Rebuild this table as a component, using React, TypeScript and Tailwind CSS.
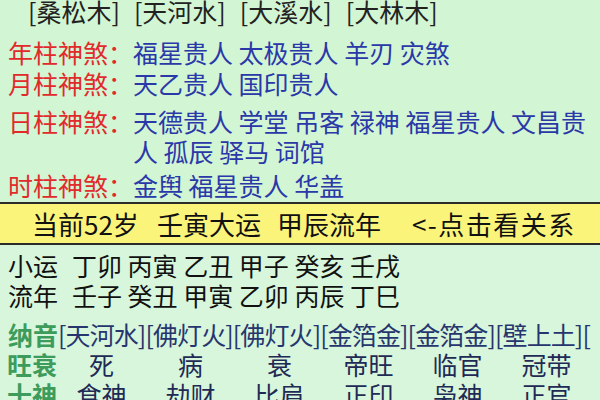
const font = { fontFamily: '"Noto Sans CJK SC", "Noto Sans", sans-serif' };

const pillars = ['[桑松木]', '[天河水]', '[大溪水]', '[大林木]'];

const shensha = [
  { label: '年柱神煞：', value: '福星贵人 太极贵人 羊刃 灾煞', cls: 'mt-[15px] leading-[31px]' },
  { label: '月柱神煞：', value: '天乙贵人 国印贵人', cls: 'leading-[31px]' },
  { label: '日柱神煞：', value: '天德贵人 学堂 吊客 禄神 福星贵人 文昌贵人 孤辰 驿马 词馆', cls: 'mt-[7px] leading-[30px]' },
  { label: '时柱神煞：', value: '金舆 福星贵人 华盖', cls: 'mt-[4px] leading-[31px]' },
];

const nayin = ['[天河水]', '[佛灯火]', '[佛灯火]', '[金箔金]', '[金箔金]', '[壁上土]', '['];
const wangshuai = ['死', '病', '衰', '帝旺', '临官', '冠带'];
const shishen = ['食神', '劫财', '比肩', '正印', '枭神', '正官'];

function GridRow({ label, items }: { label: string; items: string[] }) {
  return (
    <div className="grid grid-cols-[50px_repeat(6,89px)] pl-[7px] leading-[30px]">
      <span className="font-bold text-[#3d9b5b]">{label}</span>
      {items.map((it, i) => (
        <span key={i} className="text-center text-[#1f2a55]">{it}</span>
      ))}
    </div>
  );
}

export default function App() {
  return (
    <div className="w-[600px] h-[400px] overflow-hidden text-[25px]" style={font}>
      <div className="bg-[#d2f5d4] pb-[1px]">
        <div className="flex gap-[14px] h-[22px] leading-[22px] pl-[28px] text-[#222]">
          {pillars.map((p, i) => (
            <span key={i}>{p}</span>
          ))}
        </div>
        {shensha.map((r) => (
          <div key={r.label} className={`flex pl-[8px] ${r.cls}`}>
            <span className="w-[125px] shrink-0 text-[#e12a2a]">{r.label}</span>
            <span className="flex-1 text-[#2a38a8]">{r.value}</span>
          </div>
        ))}
      </div>

      <div className="flex h-[43px] pl-[32px] border-y-2 border-[#2b2b2b] bg-[#fbf47a] text-[26px] leading-[39px] text-[#111] whitespace-nowrap">
        <span>当前52岁</span>
        <span className="ml-[18px]">壬寅大运</span>
        <span className="ml-[16px]">甲辰流年</span>
        <span className="ml-[31px] tracking-[1.5px]">&lt;-点击看关系</span>
      </div>

      <div className="bg-[#d7f6dc] pt-[5px] h-[200px]">
        <div className="flex pl-[8px] leading-[30px] text-[#111]">
          <span className="w-[64px] shrink-0">小运</span>
          <span>丁卯 丙寅 乙丑 甲子 癸亥 壬戌</span>
        </div>
        <div className="flex pl-[8px] leading-[30px] text-[#111]">
          <span className="w-[64px] shrink-0">流年</span>
          <span>壬子 癸丑 甲寅 乙卯 丙辰 丁巳</span>
        </div>
        <div className="mt-[9px] flex pl-[8px] leading-[30px] whitespace-nowrap">
          <span className="w-[50px] shrink-0 font-bold text-[#3d9b5b]">纳音</span>
          <span className="tracking-[-0.9px] text-[#26356e]">{nayin.join('')}</span>
        </div>
        <GridRow label="旺衰" items={wangshuai} />
        <GridRow label="十神" items={shishen} />
      </div>
    </div>
  );
}
